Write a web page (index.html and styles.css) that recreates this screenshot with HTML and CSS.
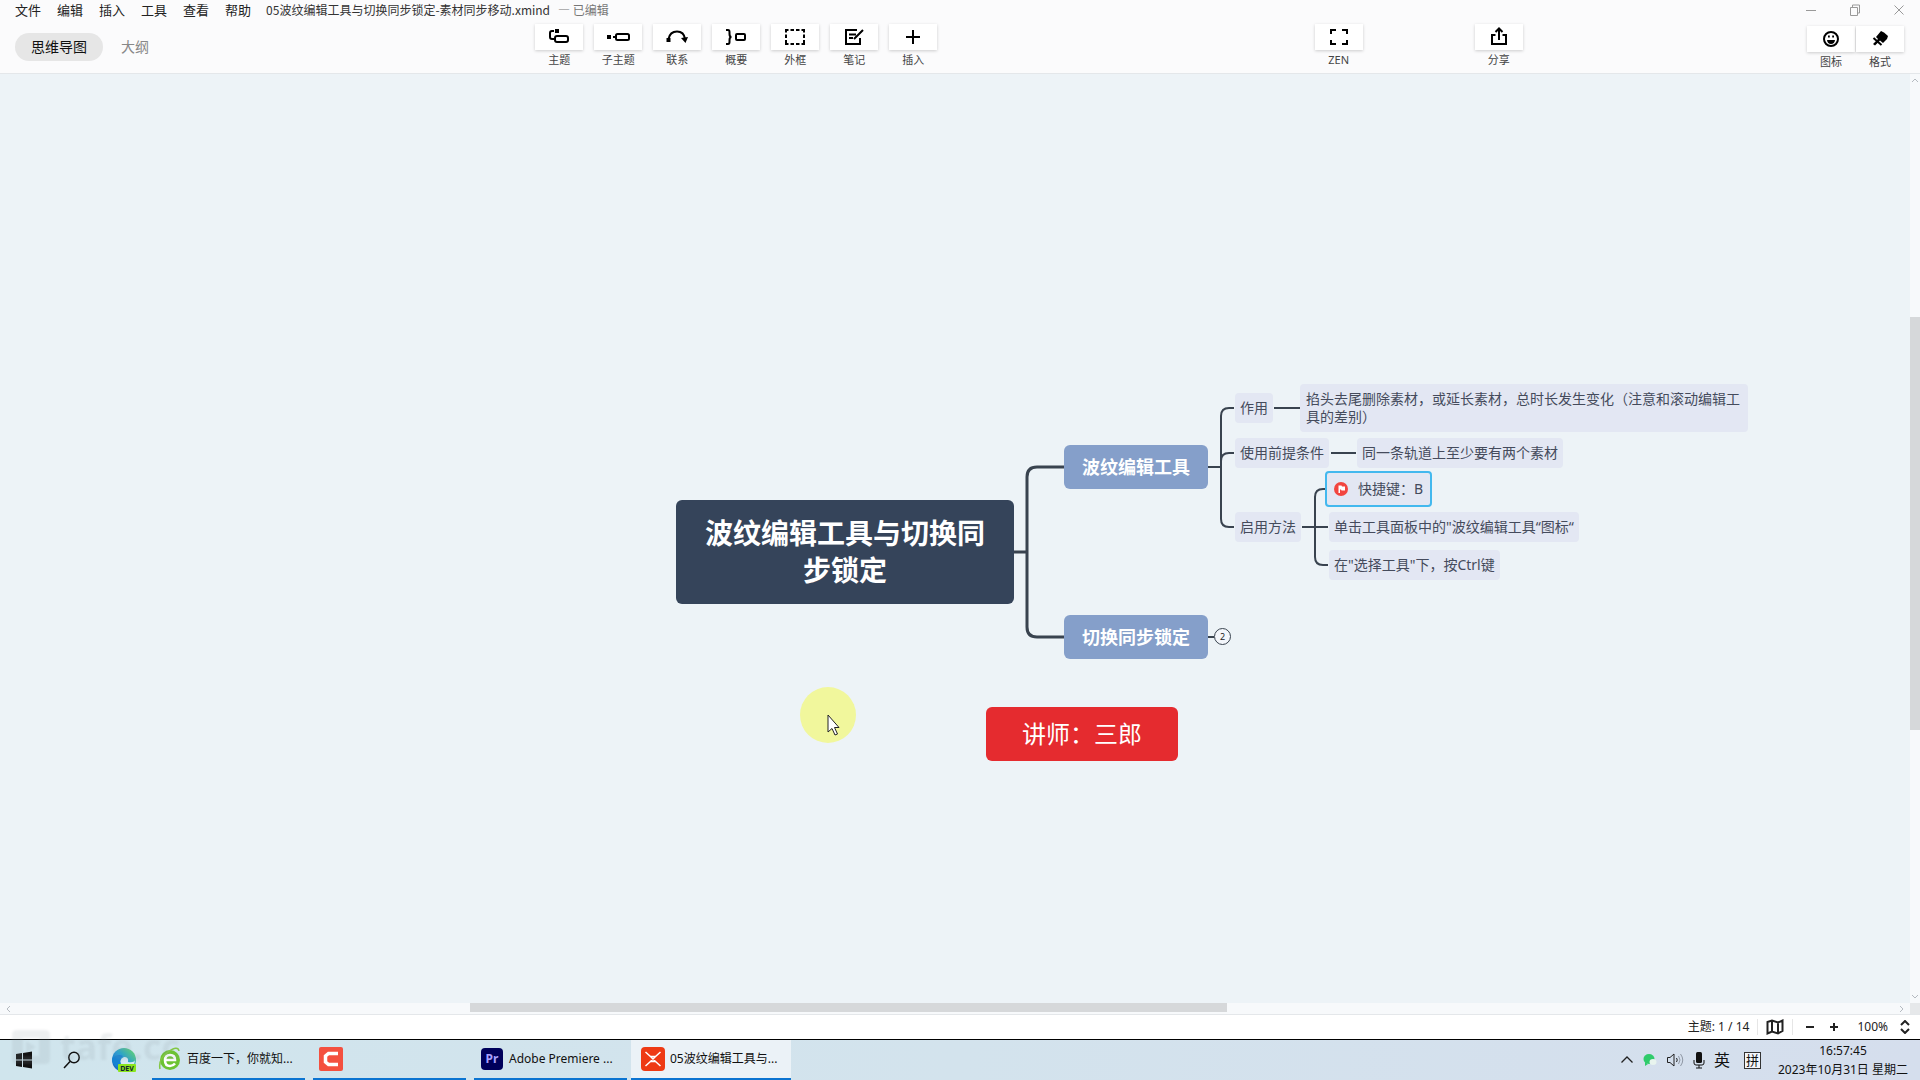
FILE: index.html
```html
<!DOCTYPE html>
<html lang="zh-CN">
<head>
<meta charset="utf-8">
<title>05波纹编辑工具与切换同步锁定-素材同步移动.xmind</title>
<link rel="stylesheet" href="styles.css">
</head>
<body>
<header class="header">
  <div class="titlebar">
    <nav class="menu">
      <button>文件</button><button>编辑</button><button>插入</button><button>工具</button><button>查看</button><button>帮助</button>
    </nav>
    <span class="doc-name">05波纹编辑工具与切换同步锁定-素材同步移动.xmind</span>
    <span class="doc-state">— 已编辑</span>
    <div class="window-controls">
      <button aria-label="最小化"><svg width="12" height="12"><path d="M1 6.500h10"/></svg></button>
      <button aria-label="还原"><svg width="12" height="12"><path d="M1.500 3.500h7v8h-7zM3.500 3V1h7v8H9"/></svg></button>
      <button aria-label="关闭"><svg width="12" height="12"><path d="M1.500 1.500l9 9M10.500 1.500l-9 9"/></svg></button>
    </div>
  </div>
  <div class="toolbar">
    <div class="tabs">
      <button class="tab active">思维导图</button>
      <button class="tab">大纲</button>
    </div>
    <div class="tools">
      <button class="tool"><span class="face"><svg width="24" height="20"><path d="M7 4H5Q3 4 3 6v4q0 2 2 2h2"/><path class="solid" d="M8 2h4v4H8z"/><rect x="8" y="9" width="13" height="6" rx="2"/></svg></span>主题</button>
      <button class="tool"><span class="face"><svg width="24" height="20"><path class="solid" d="M1 8h4v4H1z"/><path d="M7 10h3"/><rect x="10" y="7" width="13" height="6" rx="1.500"/></svg></span>子主题</button>
      <button class="tool"><span class="face"><svg width="24" height="20"><path d="M3.500 12Q5 4.500 12 4.500T20 12"/><path class="solid" d="M1.500 11h4v4h-4zM16 11l7-1-2.500 6z"/></svg></span>联系</button>
      <button class="tool"><span class="face"><svg width="24" height="20"><path d="M2 3h2q1.500 0 1.500 2v2q0 3 2 3-2 0-2 3v2q0 2-1.500 2H2"/><rect x="12" y="7" width="9" height="6" rx="1"/></svg></span>概要</button>
      <button class="tool"><span class="face"><svg width="24" height="20"><path stroke-dasharray="3.500 2" d="M2 3h20M2 17h20M3 2v16M21 2v16"/></svg></span>外框</button>
      <button class="tool"><span class="face"><svg width="24" height="20"><path d="M15 3H4v14h14v-6M7 7.500h7M7 11h4M12 12l9-9"/></svg></span>笔记</button>
      <button class="tool"><span class="face"><svg width="24" height="20"><path d="M12 3v14M5 10h14"/></svg></span>插入</button>
    </div>
    <button class="tool"><span class="face"><svg width="24" height="20"><path d="M4 7V3h5M15 3h5v4M20 13v4h-5M9 17H4v-4"/></svg></span>ZEN</button>
    <button class="tool"><span class="face"><svg width="24" height="20"><path d="M8.500 8H5v9h14V8h-3.500M12 13V2M8.500 5L12 1.500 15.500 5"/></svg></span>分享</button>
    <div class="panel-tools">
      <button class="tool"><span class="face"><svg width="24" height="20"><circle cx="12" cy="10" r="7"/><path class="solid" d="M9 6.500h1.800v2H9zM13.200 6.500H15v2h-1.800zM8 11h8q-.5 4-4 4t-4-4z"/></svg></span>图标</button>
      <button class="tool"><span class="face"><svg width="24" height="20"><path class="solid" d="M13 2l3 1.500L20 7l-1 3-4 4-3-2.500-5 5L5 15l5-5-2-2z"/><path d="M5.500 9l8 7"/></svg></span>格式</button>
    </div>
  </div>
</header>

<main class="workspace">
  <section class="canvas">
    <svg class="links" width="100%" height="100%">
      <g class="main-links"><path d="M1014 478h13M1064 393h-27q-10 0-10 10v150q0 10 10 10h27"/></g>
      <g class="sub-links">
        <path d="M1208 393h13M1234 334h-5q-8 0-8 8v103q0 8 8 8h5M1221 387q0-8 8-8h5"/>
        <path d="M1274 334h26M1331 379h25M1302 453h26"/>
        <path d="M1328 415h-5q-8 0-8 8v60q0 8 8 8h5M1208 563h6"/>
      </g>
    </svg>
    <div class="node root">波纹编辑工具与切换同步锁定</div>
    <div class="node branch ripple">波纹编辑工具</div>
    <div class="node branch sync">切换同步锁定</div>
    <button class="node count">2</button>
    <div class="node leaf effect">作用</div>
    <div class="node leaf effect-note">掐头去尾删除素材，或延长素材，总时长发生变化（注意和滚动编辑工具的差别）</div>
    <div class="node leaf premise">使用前提条件</div>
    <div class="node leaf premise-note">同一条轨道上至少要有两个素材</div>
    <div class="node leaf enable">启用方法</div>
    <div class="node leaf shortcut"><svg width="14" height="14"><circle cx="7" cy="7" r="7" fill="#f2453f"/><path d="M4.500 11V3.500h3l.5 1h3v4H7.500l-.5-1h-1V11z" fill="#fff"/></svg>快捷键：B</div>
    <div class="node leaf click-icon">单击工具面板中的"波纹编辑工具“图标“</div>
    <div class="node leaf ctrl">在"选择工具"下，按Ctrl键</div>
    <div class="node teacher">讲师：三郎</div>
    <div class="pointer"><svg width="13" height="22"><path d="M1 1v17l4-3.500 3 6.500 2.500-1-3-6.500H12z" fill="#fff" stroke="#222"/></svg></div>
  </section>
  <div class="vscroll">
    <svg width="8" height="6"><path d="M1 5l3-3 3 3"/></svg>
    <div class="vtrack"><div class="vthumb"></div></div>
    <svg width="8" height="6"><path d="M1 1l3 3 3-3"/></svg>
  </div>
  <div class="hscroll">
    <svg width="6" height="8"><path d="M5 1L2 4l3 3"/></svg>
    <div class="htrack"><div class="hthumb"></div></div>
    <svg width="6" height="8"><path d="M1 1l3 3-3 3"/></svg>
  </div>
  <div class="corner"></div>
</main>

<div class="statusbar">
  <span class="topics">主题: 1 / 14</span>
  <button class="map-button" aria-label="导航图"><svg width="18" height="16"><path d="M1.500 3L6 1.500 12 3.500 16.500 1.500V12L12 14.500 6 12.500 1.500 14.500zM6 1.500v11M12 3.500v11"/></svg></button>
  <button class="zoom-button" aria-label="缩小"><svg width="10" height="10"><path d="M1 5h8"/></svg></button>
  <button class="zoom-button" aria-label="放大"><svg width="10" height="10"><path d="M1 5h8M5 1v8"/></svg></button>
  <button class="zoom-level">100%<svg width="10" height="14"><path d="M1 5l4-4 4 4M1 9l4 4 4-4"/></svg></button>
</div>

<footer class="taskbar">
  <button class="launcher" aria-label="开始"><svg width="18" height="18"><path fill="#111" d="M1 3l6-1v6.500H1zM8 2l9-1.500v8H8zM1 9.500h6V16l-6-1zM8 9.500h9v8L8 16z"/></svg></button>
  <button class="launcher" aria-label="搜索"><svg width="18" height="18" fill="none" stroke="#111" stroke-width="1.500"><circle cx="11" cy="6.500" r="5.200"/><path d="M7 10.500L1 17"/></svg></button>
  <button class="launcher" aria-label="Edge Dev"><svg width="26" height="26"><defs><linearGradient id="edge" x1="0" y1="1" x2="1" y2="0"><stop offset="0" stop-color="#1557b8"/><stop offset=".5" stop-color="#229cd8"/><stop offset="1" stop-color="#6edb5f"/></linearGradient></defs><circle cx="13" cy="13" r="12" fill="url(#edge)"/><path d="M11 20q-4-8 2-10 5 0 4 5 7 1 7-3 0 10-9 9z" fill="#d4eaf5"/><path d="M1 13Q5 6 12 9q-5 3-1 12-9-1-10-8z" fill="#1683d2"/><rect x="7" y="17" width="18" height="8" rx="1" fill="#8be51d"/><text x="16" y="24" class="dev">DEV</text></svg></button>
  <div class="tasks">
    <button class="task"><svg width="24" height="24"><circle cx="12" cy="13" r="10" fill="#6cc332"/><path d="M7 13h10q0-5-5-5t-5 5.500 5 5.500q3 0 5-2.500" fill="none" stroke="#fff" stroke-width="2.500"/><path d="M2 22Q0 12 10 5t11-1" fill="none" stroke="#83c744" stroke-width="1.500"/></svg><span>百度一下，你就知...</span></button>
    <button class="task" aria-label="Camtasia"><svg width="24" height="24"><rect width="24" height="24" rx="2" fill="#f4503f"/><path d="M19 6.500H9.500L6.500 9v6l3 2.500H19" fill="none" stroke="#fff" stroke-width="3.500"/></svg></button>
    <button class="task"><svg width="24" height="24"><rect x="1" y="1" width="22" height="22" rx="4" fill="#00005b"/><text x="12" y="16" class="pr">Pr</text></svg><span>Adobe Premiere ...</span></button>
    <button class="task current"><svg width="24" height="24"><rect width="24" height="24" rx="4" fill="#ee3a14"/><path d="M4.500 5l5 4.500h5l5-4.500M4.500 19l5-4.500h5l5 4.500M9.500 9.500l5 5M14.500 9.500l-5 5" fill="none" stroke="#fff" stroke-width="1.500"/></svg><span>05波纹编辑工具与...</span></button>
  </div>
  <div class="tray">
    <svg width="14" height="16"><path d="M1.500 10.500L7 5l5.500 5.500" fill="none" stroke="#222" stroke-width="1.300"/></svg>
    <svg width="14" height="16"><ellipse cx="6" cy="7" rx="5.500" ry="5" fill="#2fcb6b"/><ellipse cx="10" cy="10" rx="3.500" ry="3" fill="#e8f4ee"/><path d="M2 10v4l3-2z" fill="#2fcb6b"/></svg>
    <svg width="18" height="16" fill="none" stroke="#222"><path d="M1.500 5.500H4l4-3.500v12l-4-3.500H1.500zM10.500 6q1.500 2 0 4"/><path d="M12.500 4q3 4 0 8M14.500 2q4.500 6 0 12" stroke="#8f97a4"/></svg>
    <svg width="12" height="18"><rect x="3" y="1" width="6" height="11" rx="1.500" fill="#111"/><path d="M1 9v3q0 2 2 2h6q2 0 2-2V9M6 14v3M3 17h6" fill="none" stroke="#111"/></svg>
    <span class="lang">英</span>
    <span class="ime">拼</span>
    <div class="clock"><time>16:57:45</time><span>2023年10月31日 星期二</span></div>
  </div>
  <div class="watermark"><svg width="38" height="34"><path fill-rule="evenodd" d="M5 0h28q5 0 5 5v24q0 5-5 5H5q-5 0-5-5V5q0-5 5-5zM11 8v18h16V8zM14 11l10 6-10 6z"/></svg>tafe.cc</div>
</footer>
</body>
</html>
```
FILE: styles.css
```css
* { box-sizing: border-box; }
body {
  margin: 0;
  min-height: 100vh;
  display: flex;
  flex-direction: column;
  font-family: "Noto Sans", "Noto Sans CJK SC", sans-serif;
  font-size: 12px;
  line-height: 18px;
  color: #222;
}
button {
  margin: 0;
  padding: 0;
  border: 0;
  background: none;
  font: inherit;
  color: inherit;
}
svg { display: block; flex: none; }

.header {
  display: flex;
  flex-direction: column;
  height: 74px;
  background: #fbfbfc;
  border-bottom: 1px solid #e4e7ea;
}
.titlebar {
  display: flex;
  align-items: center;
  height: 20px;
  padding: 0 15px;
  font-family: "Noto Sans CJK SC", sans-serif;
}
.menu { display: flex; gap: 16px; font-size: 13px; margin-right: 15px; }
.doc-name { color: #333; }
.doc-state { margin-left: 8px; color: #777; }
.window-controls { display: flex; gap: 32px; margin-left: auto; }
.window-controls path { fill: none; stroke: #999; }

.toolbar {
  display: grid;
  grid-template-columns: 535fr 779fr 160fr 332fr auto;
  align-items: start;
  justify-items: start;
  padding: 4px 16px 0 0;
}
.tabs { display: flex; gap: 2px; padding: 9px 0 0 15px; font-size: 14px; }
.tab { height: 28px; padding: 0 16px; border-radius: 14px; color: #888; }
.tab.active { background: #e6e6e6; color: #111; }
.tools { display: flex; gap: 11px; }
.tool {
  display: flex;
  flex-direction: column;
  align-items: center;
  gap: 1px;
  width: 48px;
  font-size: 11px;
  color: #444;
}
.face {
  display: flex;
  align-items: center;
  justify-content: center;
  align-self: stretch;
  height: 26px;
  background: #fff;
  box-shadow: 0 1px 3px #00000030;
}
.face svg { fill: none; stroke: #000; stroke-width: 2; }
.face .solid { fill: #000; stroke: none; }
.panel-tools { display: flex; gap: 1px; padding-top: 2px; }

.workspace {
  flex: 1;
  display: grid;
  grid-template: 1fr 11px / 1fr 10px;
}
.canvas { position: relative; overflow: hidden; background: #edf3f7; }
.links { position: absolute; inset: 0; fill: none; }
.main-links { stroke: #39434f; stroke-width: 3; }
.sub-links { stroke: #39434f; stroke-width: 2; }
.node { position: absolute; white-space: nowrap; }
.root {
  left: 676px; top: 426px; width: 338px;
  padding: 15px 28px;
  border-radius: 6px;
  background: #35445a;
  color: #fff;
  font-size: 28px;
  font-weight: 700;
  line-height: 37px;
  text-align: center;
  white-space: normal;
}
.branch {
  left: 1064px;
  padding: 10px 18px;
  border-radius: 6px;
  background: #859fca;
  color: #fff;
  font-size: 18px;
  font-weight: 700;
  line-height: 24px;
}
.ripple { top: 371px; }
.sync { top: 541px; }
.count {
  left: 1214px; top: 554px; width: 17px; height: 17px;
  border: 1px solid #39434f;
  border-radius: 50%;
  background: #f3f6fb;
  font-size: 9px;
  line-height: 14px;
}
.leaf {
  padding: 6px 5px;
  border-radius: 4px;
  background: #e3e7f3;
  color: #454b5c;
  font-size: 14px;
}
.effect { left: 1235px; top: 319px; }
.effect-note { left: 1300px; top: 310px; width: 448px; padding-left: 6px; white-space: normal; }
.premise { left: 1235px; top: 364px; }
.premise-note { left: 1357px; top: 364px; }
.enable { left: 1235px; top: 438px; }
.shortcut {
  left: 1325px; top: 397px;
  display: flex;
  align-items: center;
  gap: 10px;
  padding: 7px;
  border: 2px solid #43b8ee;
}
.click-icon { left: 1329px; top: 438px; }
.ctrl { left: 1329px; top: 476px; }
.teacher {
  left: 986px; top: 633px;
  padding: 11px 36px;
  border-radius: 6px;
  background: #e52b2f;
  color: #fff;
  font-size: 24px;
  line-height: 32px;
}
.pointer {
  position: absolute;
  left: 800px; top: 613px;
  width: 56px; height: 56px;
  padding: 27px 0 0 27px;
  border-radius: 50%;
  background: #f1f79c;
}

.vscroll, .hscroll { display: flex; align-items: center; background: #f7f9fb; }
.vscroll { flex-direction: column; padding: 3px 0; }
.hscroll { padding: 0 5px; }
.vscroll path, .hscroll path { fill: none; stroke: #b5bac0; }
.vtrack { flex: 1; align-self: stretch; padding-top: 234px; }
.vthumb { height: 61%; background: #d6d8da; }
.htrack { flex: 1; align-self: stretch; padding-left: 459px; }
.hthumb { width: 53%; height: 9px; background: #d6d8da; }
.corner { background: #e6e8ea; }

.statusbar {
  display: flex;
  align-items: center;
  justify-content: flex-end;
  height: 26px;
  padding-right: 10px;
  border-top: 1px solid #e4e7ea;
  border-bottom: 1px solid #000;
  background: #fff;
}
.statusbar path { fill: none; stroke: #222; stroke-width: 2; }
.topics { padding-right: 8px; }
.map-button { padding: 0 8px; border: 1px solid #e6e6e6; border-width: 0 1px; }
.zoom-button { margin-left: 12px; }
.zoom-button + .zoom-button { margin-left: 14px; }
.zoom-level { display: flex; align-items: center; gap: 12px; margin-left: 18px; }

.taskbar {
  position: relative;
  display: flex;
  align-items: center;
  height: 40px;
  background: linear-gradient(90deg, #d0e5ed, #d3e3ed 50%, #d5deed);
  color: #111;
}
.launcher { display: flex; justify-content: center; width: 48px; }
.launcher:nth-child(3) { width: 56px; }
.dev { font: 700 7px "Noto Sans", sans-serif; text-anchor: middle; fill: #123; }
.pr { font: 700 12px "Noto Sans", sans-serif; text-anchor: middle; fill: #a8a0ff; }
.tasks { display: flex; align-self: stretch; gap: 8px; }
.task {
  display: flex;
  align-items: center;
  gap: 5px;
  width: 153px;
  padding: 0 0 0 6px;
  border-bottom: 2px solid #0b74d1;
}
.task.current { width: 160px; margin-left: -4px; padding-left: 10px; background: #ebf2f7; }
.tray { display: flex; align-items: center; gap: 9px; margin-left: auto; padding-right: 12px; }
.lang { font-size: 16px; }
.ime {
  width: 17px;
  margin-left: 5px;
  border: 1px solid #333;
  background: #f4f6fa;
  font-size: 13px;
  line-height: 15px;
  text-align: center;
}
.clock { display: flex; flex-direction: column; align-items: center; margin-left: 8px; line-height: 19px; }
.watermark {
  position: absolute;
  left: 12px; top: -10px;
  display: flex;
  align-items: center;
  gap: 10px;
  color: #8c98a0;
  font: 700 36px/34px "Noto Sans", sans-serif;
  opacity: .15;
  filter: blur(1px);
  pointer-events: none;
}
.watermark path { fill: #8c98a0; }
```
